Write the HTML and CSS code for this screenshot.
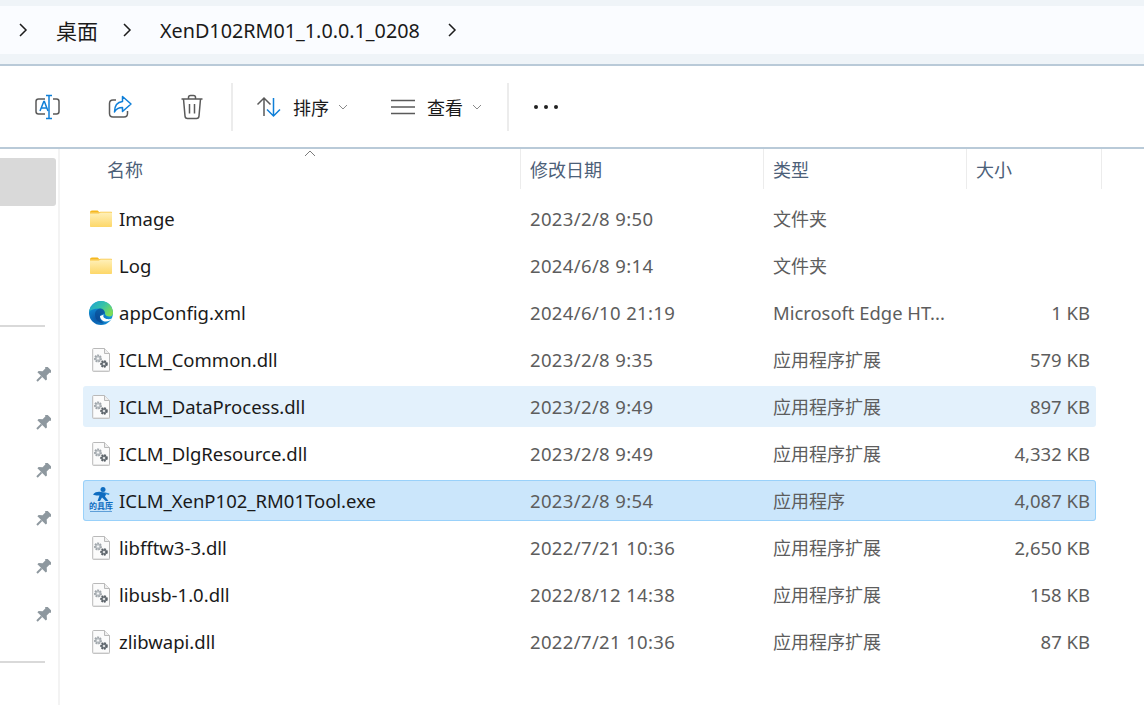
FILE: index.html
```html
<!DOCTYPE html>
<html lang="zh-CN">
<head>
    <meta charset="UTF-8">
    <title>桌面</title>
    <link rel="stylesheet" href="styles.css">
</head>
<body>
    <svg class="defs" width="0" height="0">
        <defs>
            <symbol id="chev" viewBox="0 0 12 16">
                <path d="M3 2l6 6-6 6" fill="none" stroke="#1c1c1c" stroke-width="1.5"/>
            </symbol>
            <symbol id="down" viewBox="0 0 10 6">
                <path d="M1 1l4 4 4-4" fill="none" stroke="#8a8a8a" stroke-width="1"/>
            </symbol>
            <symbol id="pin" viewBox="0 0 16 16">
                <g transform="rotate(45 8 8)" fill="#8e989f">
                    <path d="M3.800 -1h8.400v1.800l-1.300 1v3.900l3 2.600v1.700H2.100V8.300l3-2.600V1.800l-1.300-1z"/>
                    <path d="M7 10h2v6.500H7z"/>
                </g>
            </symbol>
            <symbol id="folder" viewBox="0 0 24 20">
                <path d="M1 3.5C1 2.4 1.800 1.600 3 1.600h5.600l2.400 2.200H1z" fill="#f5b81f"/>
                <path d="M1 3.800h8.600L11.400 2.800H22c.6 0 1 .4 1 1V6H1z" fill="#f9c43c"/>
                <path d="M1 4.600h9l1.600-1H22c.6 0 1 .4 1 1v12.400c0 .6-.4 1-1 1H2c-.6 0-1-.4-1-1z" fill="url(#fold)"/>
            </symbol>
            <linearGradient id="fold" x1="0" y1="0" x2="0" y2="1">
                <stop offset="0" stop-color="#fff0b8"/>
                <stop offset="1" stop-color="#fdd768"/>
            </linearGradient>
            <symbol id="dll" viewBox="0 0 20 24">
                <path d="M2.500 .5h11l5 5v17.200c0 .5-.3.8-.8.8H2.500c-.5 0-.8-.3-.8-.8V1.300c0-.5.3-.8.8-.8z" fill="#fbfbfb" stroke="#b9b9b9"/>
                <path d="M13.500 .5v5h5" fill="#eee" stroke="#b9b9b9"/>
                <path d="M2 22.500h16.400v1H2z" fill="#cfcfcf"/>
                <circle cx="7" cy="10.500" r="3" fill="#c2c7cb" stroke="#a0a6ab" stroke-width="2" stroke-dasharray="1.800 .8"/>
                <circle cx="7" cy="10.500" r="1" fill="#fbfbfb"/>
                <circle cx="13" cy="16" r="2.800" fill="#7b8288" stroke="#5a6167" stroke-width="2" stroke-dasharray="1.800 .8"/>
                <circle cx="13" cy="16" r="1" fill="#fbfbfb"/>
            </symbol>
            <radialGradient id="edge1" cx=".3" cy=".75" r=".75">
                <stop offset="0" stop-color="#0b58a8"/>
                <stop offset=".6" stop-color="#0f86d0"/>
                <stop offset="1" stop-color="#1ba0dd"/>
            </radialGradient>
            <linearGradient id="edge2" x1="0" y1="0" x2="1" y2=".6">
                <stop offset="0" stop-color="#1a9fd8"/>
                <stop offset=".55" stop-color="#36c2a8"/>
                <stop offset="1" stop-color="#7ddc58"/>
            </linearGradient>
        </defs>
    </svg>

    <div class="addr">
        <div class="crumbs">
            <svg class="chev first"><use href="#chev"/></svg>
            <span class="crumb-cn">桌面</span>
            <svg class="chev"><use href="#chev"/></svg>
            <span class="crumb">XenD102RM01_1.0.0.1_0208</span>
            <svg class="chev"><use href="#chev"/></svg>
        </div>
    </div>

    <div class="toolbar">
        <div class="tool">
            <svg width="28" height="26" viewBox="0 0 28 26">
                <path d="M11 5H4.500C3 5 2 6 2 7.500v10C2 19 3 20 4.500 20H11M19 5h3.500C24 5 25 6 25 7.500v10c0 1.500-1 2.500-2.500 2.500H19" fill="none" stroke="#5a5a5a" stroke-width="1.500"/>
                <path d="M12 1.500h6M12 24.500h6M15 1.500v23" fill="none" stroke="#0f7fd8" stroke-width="1.500"/>
                <path d="M6 17l3.800-9.500h.6L14 17M7.300 14h5.500" fill="none" stroke="#0f7fd8" stroke-width="1.500"/>
            </svg>
        </div>
        <div class="tool">
            <svg width="26" height="24" viewBox="0 0 26 24">
                <path d="M9 5H6C4 5 2.500 6.500 2.500 8.500v10c0 2 1.500 3.500 3.500 3.500h11c2 0 3.500-1.500 3.500-3.500V16" fill="none" stroke="#5a5a5a" stroke-width="1.500"/>
                <path d="M15.500 1.500L24 9l-8.500 7.500v-4c-4 0-6.500 1.500-8 4.500 0-6 3-10 8-10.500z" fill="none" stroke="#0f7fd8" stroke-width="1.500" stroke-linejoin="round"/>
            </svg>
        </div>
        <div class="tool">
            <svg width="24" height="26" viewBox="0 0 24 26">
                <path d="M1.500 5h21M8.500 5V3.500C8.500 2.500 9.500 1.500 10.500 1.500h3c1 0 2 1 2 2V5M3.500 5l1.500 17c.1 1.500 1 2.500 2.500 2.500h9c1.500 0 2.400-1 2.500-2.500L20.500 5M9.500 10v9.500M14.500 10v9.500" fill="none" stroke="#5a5a5a" stroke-width="1.500"/>
            </svg>
        </div>
        <div class="sep"></div>
        <div class="menu menu-sort">
            <svg width="26" height="22" viewBox="0 0 26 22">
                <path d="M8 20V2M1.500 8.500L8 2l6.500 6.500" fill="none" stroke="#5a5a5a" stroke-width="1.500"/>
                <path d="M17.500 2v18M11 13.500l6.500 6.500 6.500-6.500" fill="none" stroke="#0f7fd8" stroke-width="1.500"/>
            </svg>
            <span class="menu-label">排序</span>
            <svg class="down"><use href="#down"/></svg>
        </div>
        <div class="menu menu-view">
            <svg width="24" height="16" viewBox="0 0 24 16">
                <path d="M0 1.500h24M0 8h24M0 14.500h24" fill="none" stroke="#5a5a5a" stroke-width="1.500"/>
            </svg>
            <span class="menu-label">查看</span>
            <svg class="down"><use href="#down"/></svg>
        </div>
        <div class="sep sep-2"></div>
        <div class="dots"><i></i><i></i><i></i></div>
    </div>

    <div class="main">
        <div class="side">
            <div class="side-sel"></div>
            <div class="side-line line-1"></div>
            <div class="pins">
                <svg class="pin"><use href="#pin"/></svg>
                <svg class="pin"><use href="#pin"/></svg>
                <svg class="pin"><use href="#pin"/></svg>
                <svg class="pin"><use href="#pin"/></svg>
                <svg class="pin"><use href="#pin"/></svg>
                <svg class="pin"><use href="#pin"/></svg>
            </div>
            <div class="side-line line-2"></div>
        </div>

        <div class="list">
            <div class="head">
                <div class="col col-name">名称<svg class="sort-up" width="12" height="7" viewBox="0 0 12 7"><path d="M1 6l5-5 5 5" fill="none" stroke="#7c7c7c"/></svg></div>
                <div class="col">修改日期</div>
                <div class="col">类型</div>
                <div class="col col-last">大小</div>
            </div>

            <div class="row">
                <div class="name"><svg class="ico ico-folder"><use href="#folder"/></svg>Image</div>
                <div class="date">2023/2/8 9:50</div>
                <div class="type">文件夹</div>
                <div class="size"></div>
            </div>
            <div class="row">
                <div class="name"><svg class="ico ico-folder"><use href="#folder"/></svg>Log</div>
                <div class="date">2024/6/8 9:14</div>
                <div class="type">文件夹</div>
                <div class="size"></div>
            </div>
            <div class="row">
                <div class="name">
                    <svg class="ico" viewBox="0 0 24 24">
                        <circle cx="12" cy="12" r="12" fill="url(#edge1)"/>
                        <path d="M0 11C1 4.500 6 0 12 0c7 0 12 5.500 12 12 0 1-.5 3.500-3.500 3.500-2.500 0-4.500-1-4.500-3 0-3-3-5-6-5C5 7.500 1.500 9 0 11z" fill="url(#edge2)"/>
                        <path d="M12 7.500c-3.500 0-6 2.500-6 6 0 4.500 3.500 9 9 9 .5 0-4-2-4-6 0-2.500 2-4 5-4 0-2-1.500-5-4-5z" fill="#0a3f86" opacity=".55"/>
                        <path d="M11 15c0 3.500 3 5.500 6 5.500 2.500 0 4.500-1 6-3-2 1-5.500 1-7.500-.5-1.500-1-1.500-2.500-.5-3.500z" fill="#fff"/>
                    </svg>
                    appConfig.xml
                </div>
                <div class="date">2024/6/10 21:19</div>
                <div class="type type-latin">Microsoft Edge HT...</div>
                <div class="size">1 KB</div>
            </div>
            <div class="row">
                <div class="name"><svg class="ico ico-dll"><use href="#dll"/></svg>ICLM_Common.dll</div>
                <div class="date">2023/2/8 9:35</div>
                <div class="type">应用程序扩展</div>
                <div class="size">579 KB</div>
            </div>
            <div class="row hover">
                <div class="name"><svg class="ico ico-dll"><use href="#dll"/></svg>ICLM_DataProcess.dll</div>
                <div class="date">2023/2/8 9:49</div>
                <div class="type">应用程序扩展</div>
                <div class="size">897 KB</div>
            </div>
            <div class="row">
                <div class="name"><svg class="ico ico-dll"><use href="#dll"/></svg>ICLM_DlgResource.dll</div>
                <div class="date">2023/2/8 9:49</div>
                <div class="type">应用程序扩展</div>
                <div class="size">4,332 KB</div>
            </div>
            <div class="row selected">
                <div class="name">
                    <div class="logo">
                        <svg width="22" height="15" viewBox="0 0 22 15">
                            <circle cx="13" cy="2.600" r="2.500" fill="#0f6cc0"/>
                            <path d="M3 7.500c2-2.500 5-3 8-2.500l4 .5c1 .1 1.500.8 1.200 1.500L15 9.500l3.500 4.500h-2.800L12 10.500 10 14H7.500l2-5.500c-2.500 0-4.500.2-6.500-1z" fill="#0f6cc0"/>
                            <path d="M15.500 5.500l4 1-.5 1.400-4-1z" fill="#2a8bd8"/>
                        </svg>
                        <span class="logo-text">的具库</span>
                        <span class="logo-sub"></span>
                    </div>
                    ICLM_XenP102_RM01Tool.exe
                </div>
                <div class="date">2023/2/8 9:54</div>
                <div class="type">应用程序</div>
                <div class="size">4,087 KB</div>
            </div>
            <div class="row">
                <div class="name"><svg class="ico ico-dll"><use href="#dll"/></svg>libfftw3-3.dll</div>
                <div class="date">2022/7/21 10:36</div>
                <div class="type">应用程序扩展</div>
                <div class="size">2,650 KB</div>
            </div>
            <div class="row">
                <div class="name"><svg class="ico ico-dll"><use href="#dll"/></svg>libusb-1.0.dll</div>
                <div class="date">2022/8/12 14:38</div>
                <div class="type">应用程序扩展</div>
                <div class="size">158 KB</div>
            </div>
            <div class="row">
                <div class="name"><svg class="ico ico-dll"><use href="#dll"/></svg>zlibwapi.dll</div>
                <div class="date">2022/7/21 10:36</div>
                <div class="type">应用程序扩展</div>
                <div class="size">87 KB</div>
            </div>
        </div>
    </div>
</body>
</html>
```

FILE: styles.css
```css
:root {
    --font-ui: 'Noto Sans', 'Noto Sans CJK SC', sans-serif;
    --rule: #b9cad8;
    --soft: #ececec;
}

html, body {
    margin: 0;
    height: 705px;
    overflow: hidden;
}

body {
    background: #fff;
    color: #1a1a1a;
    font-family: var(--font-ui);
    font-size: 18px;
}

.defs {
    position: absolute;
}

/* address bar */
.addr {
    height: 48px;
    padding: 6px 0 10px;
    background: #eff4f8;
    border-bottom: 2px solid var(--rule);
}

.crumbs {
    height: 48px;
    display: flex;
    align-items: center;
    background: #fafcff;
    font-size: 19.75px;
}

.chev {
    width: 12px;
    height: 16px;
    flex: none;
}

.chev.first {
    margin-left: 17px;
}

.crumb-cn {
    margin: 0 23px 0 27px;
    font-size: 21px;
}

.crumb {
    margin: 0 26px 0 27px;
}

/* command bar */
.toolbar {
    height: 81px;
    padding-left: 12px;
    display: flex;
    align-items: center;
    border-bottom: 2px solid var(--rule);
}

.tool {
    width: 72px;
    display: flex;
    justify-content: center;
}

.sep {
    width: 2px;
    height: 48px;
    margin-left: 3px;
    background: var(--soft);
}

.menu {
    display: flex;
    align-items: center;
}

.menu-sort {
    margin-left: 23px;
}

.menu-view {
    margin-left: 43px;
}

.menu-label {
    margin-left: 11px;
}

.menu-view .menu-label {
    margin-left: 12px;
}

.down {
    width: 10px;
    height: 6px;
    margin-left: 9px;
}

.sep-2 {
    margin-left: 25px;
}

.dots {
    margin-left: 25px;
    display: flex;
    gap: 6px;
}

.dots i {
    width: 4px;
    height: 4px;
    border-radius: 50%;
    background: #222;
}

/* left pane */
.main {
    display: flex;
}

.side {
    width: 58px;
    height: 556px;
    flex: none;
    border-right: 2px solid #f3f3f3;
}

.side-sel {
    width: 56px;
    height: 48px;
    margin-top: 9px;
    background: #d9d9d9;
    border-radius: 0 3px 3px 0;
}

.side-line {
    width: 45px;
    height: 2px;
    background: #d9d9d9;
}

.line-1 {
    margin-top: 119px;
}

.line-2 {
    margin-top: 22px;
}

.pins {
    margin-top: 24px;
    padding-left: 35px;
    display: flex;
    flex-direction: column;
}

.pin {
    width: 16px;
    height: 16px;
    padding: 16px 0;
}

/* file list */
.list {
    width: 1013px;
    margin-left: 23px;
}

.head,
.row {
    display: grid;
    grid-template-columns: 437px 243px 203px 130px;
}

.head {
    height: 40px;
    margin-bottom: 9px;
    color: #4c6078;
}

.col {
    position: relative;
    display: flex;
    align-items: center;
    padding-left: 9px;
    border-left: 1px solid var(--soft);
}

.col-name {
    padding-left: 24px;
    border-left: 0;
}

.col-last {
    border-right: 1px solid var(--soft);
    margin-right: -6px;
}

.sort-up {
    position: absolute;
    left: 221px;
    top: 1px;
}

.row {
    height: 41px;
    margin-bottom: 6px;
    align-items: center;
    border-radius: 3px;
}

.row.hover {
    background: #e3f1fc;
}

.row.selected {
    background: #cbe6fb;
    outline: 1px solid #99d1fa;
    outline-offset: -1px;
}

.name {
    display: flex;
    align-items: center;
    gap: 6px;
    padding-left: 6px;
    font-size: 18.5px;
    white-space: nowrap;
}

.ico {
    width: 24px;
    height: 24px;
    flex: none;
}

.ico-folder {
    height: 20px;
}

.ico-dll {
    width: 20px;
    padding: 0 2px;
}

.logo {
    width: 24px;
    height: 28px;
    flex: none;
    display: flex;
    flex-direction: column;
    align-items: center;
}

.logo-text {
    color: #0f6cc0;
    font-size: 8px;
    line-height: 8px;
    font-weight: 700;
    font-family: 'Noto Sans CJK SC', sans-serif;
}

.logo-sub {
    width: 22px;
    height: 1px;
    margin-top: 1px;
    background: #5f9fd8;
}

.date,
.type,
.size {
    color: #5d5d5d;
    white-space: nowrap;
}

.date {
    padding-left: 10px;
    font-size: 18.5px;
    letter-spacing: 0.35px;
}

.type {
    padding-left: 10px;
    padding-bottom: 1px;
}

.type-latin {
    padding-bottom: 0;
    font-size: 18.4px;
}

.size {
    padding-right: 6px;
    font-size: 18.5px;
    text-align: right;
}
```
